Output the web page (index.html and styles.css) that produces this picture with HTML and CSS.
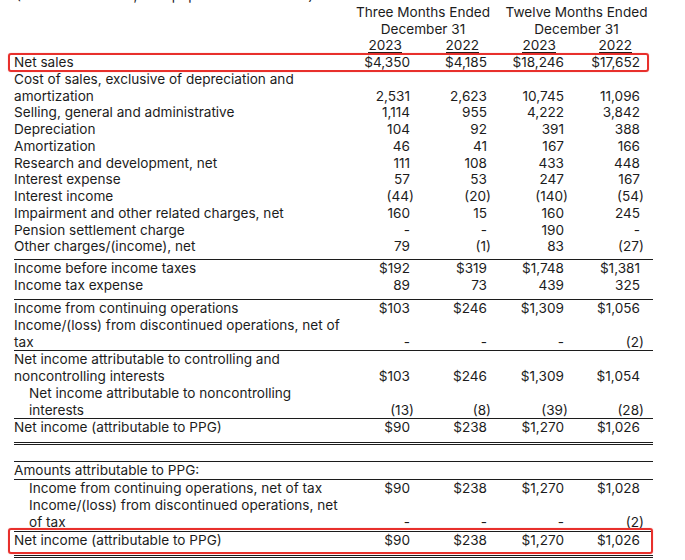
FILE: index.html
```html
<!DOCTYPE html>
<html>
<head>
<meta charset="utf-8">
<link rel="stylesheet" href="styles.css">
</head>
<body>
<div class="page">
  <div class="title">(Millions of dollars, except per share amounts)</div>
  <table class="fin">
    <colgroup>
      <col class="c-label"><col class="c-num"><col class="c-num"><col class="c-num"><col class="c-last">
    </colgroup>
    <thead>
      <tr><th></th><th colspan="2" class="grp g1">Three Months Ended</th><th colspan="2" class="grp g2">Twelve Months Ended</th></tr>
      <tr><th></th><th colspan="2" class="grp g1">December 31</th><th colspan="2" class="grp g2">December 31</th></tr>
      <tr><th></th><th class="yr"><span class="ul">2023</span></th><th class="yr"><span class="ul">2022</span></th><th class="yr"><span class="ul">2023</span></th><th class="yr yr-last"><span class="ul">2022</span></th></tr>
    </thead>
    <tbody>
      <tr class="hl hl1"><td>Net sales</td><td>$4,350</td><td>$4,185</td><td>$18,246</td><td>$17,652</td></tr>
      <tr><td>Cost of sales, exclusive of depreciation and amortization</td><td class="bot">2,531</td><td class="bot">2,623</td><td class="bot">10,745</td><td class="bot">11,096</td></tr>
      <tr><td>Selling, general and administrative</td><td>1,114</td><td>955</td><td>4,222</td><td>3,842</td></tr>
      <tr><td>Depreciation</td><td>104</td><td>92</td><td>391</td><td>388</td></tr>
      <tr><td>Amortization</td><td>46</td><td>41</td><td>167</td><td>166</td></tr>
      <tr><td>Research and development, net</td><td>111</td><td>108</td><td>433</td><td>448</td></tr>
      <tr><td>Interest expense</td><td>57</td><td>53</td><td>247</td><td>167</td></tr>
      <tr><td>Interest income</td><td><span class="neg">(44)</span></td><td><span class="neg">(20)</span></td><td><span class="neg">(140)</span></td><td><span class="neg">(54)</span></td></tr>
      <tr><td>Impairment and other related charges, net</td><td>160</td><td>15</td><td>160</td><td>245</td></tr>
      <tr><td>Pension settlement charge</td><td>-</td><td>-</td><td>190</td><td>-</td></tr>
      <tr class="rule pb4"><td>Other charges/(income), net</td><td>79</td><td><span class="neg">(1)</span></td><td>83</td><td><span class="neg">(27)</span></td></tr>
      <tr><td>Income before income taxes</td><td>$192</td><td>$319</td><td>$1,748</td><td>$1,381</td></tr>
      <tr class="rule pb5"><td>Income tax expense</td><td>89</td><td>73</td><td>439</td><td>325</td></tr>
      <tr><td>Income from continuing operations</td><td>$103</td><td>$246</td><td>$1,309</td><td>$1,056</td></tr>
      <tr class="rule"><td>Income/(loss) from discontinued operations, net of tax</td><td class="bot">-</td><td class="bot">-</td><td class="bot">-</td><td class="bot"><span class="neg">(2)</span></td></tr>
      <tr><td>Net income attributable to controlling and noncontrolling interests</td><td class="bot">$103</td><td class="bot">$246</td><td class="bot">$1,309</td><td class="bot">$1,054</td></tr>
      <tr class="rule"><td class="ind">Net income attributable to noncontrolling interests</td><td class="bot"><span class="neg">(13)</span></td><td class="bot"><span class="neg">(8)</span></td><td class="bot"><span class="neg">(39)</span></td><td class="bot"><span class="neg">(28)</span></td></tr>
      <tr class="dbl pb5"><td>Net income (attributable to PPG)</td><td>$90</td><td>$238</td><td>$1,270</td><td>$1,026</td></tr>
      <tr class="rule blank"><td>&nbsp;</td><td></td><td></td><td></td><td></td></tr>
      <tr class="rule"><td>Amounts attributable to PPG:</td><td></td><td></td><td></td><td></td></tr>
      <tr><td class="ind">Income from continuing operations, net of tax</td><td>$90</td><td>$238</td><td>$1,270</td><td>$1,028</td></tr>
      <tr class="rule pb1"><td class="ind">Income/(loss) from discontinued operations, net of tax</td><td class="bot">-</td><td class="bot">-</td><td class="bot">-</td><td class="bot"><span class="neg">(2)</span></td></tr>
      <tr class="hl hl2 dbl pb5"><td>Net income (attributable to PPG)</td><td>$90</td><td>$238</td><td>$1,270</td><td>$1,026</td></tr>
    </tbody>
  </table>
</div>
</body>
</html>
```

FILE: styles.css
```css
html, body {
  margin: 0;
  padding: 0;
  background: #ffffff;
}

.page {
  padding: 0 0 0 14px;
  font-family: Inter, "Liberation Sans", sans-serif;
  font-size: 13.6px;
  line-height: 16.75px;
  color: #1c1c1c;
}

.title {
  margin-top: -13px;
  padding-left: 2px;
  white-space: nowrap;
}

.fin {
  border-collapse: collapse;
  table-layout: fixed;
  width: 639px;
}

.c-label { width: 327px; }
.c-num { width: 77px; }
.c-last { width: 81px; }

.fin th,
.fin td {
  padding: 0;
  font-weight: normal;
  vertical-align: top;
  line-height: 16.75px;
}

.fin td + td {
  text-align: right;
  padding-right: 8px;
  white-space: nowrap;
}

.fin td + td:last-child { padding-right: 13px; }

.fin td.bot { vertical-align: bottom; }

.fin th.grp { text-align: center; white-space: nowrap; }
.fin th.g1 { padding-left: 10px; }
.fin th.g2 { padding-left: 5px; }

.fin th.yr { text-align: right; padding-right: 16px; }
.fin th.yr-last { padding-right: 21px; }

.ul {
  display: inline-block;
  line-height: 14px;
  border-bottom: 1px solid #1c1c1c;
}

.neg { margin-right: -4px; }

.fin td.ind { padding-left: 15px; }

.fin .rule td { border-bottom: 1px solid #1c1c1c; }
.fin .dbl td { border-bottom: 3px double #1c1c1c; }

.fin .pb1 td { padding-bottom: 1px; }
.fin .pb4 td { padding-bottom: 4px; }
.fin .pb5 td { padding-bottom: 5.5px; }

.fin .hl td:first-child { position: relative; }
.fin .hl td:first-child::after {
  content: "";
  position: absolute;
  left: -6px;
  border: 2px solid #e8302c;
  border-radius: 3px;
  box-shadow: 0 0 1px rgba(232, 48, 44, 0.6);
  pointer-events: none;
}
.fin .hl1 td:first-child::after { top: -1px; bottom: -1px; width: 637px; }
.fin .hl2 td:first-child::after { top: -4px; bottom: 1px; width: 641px; }
```
